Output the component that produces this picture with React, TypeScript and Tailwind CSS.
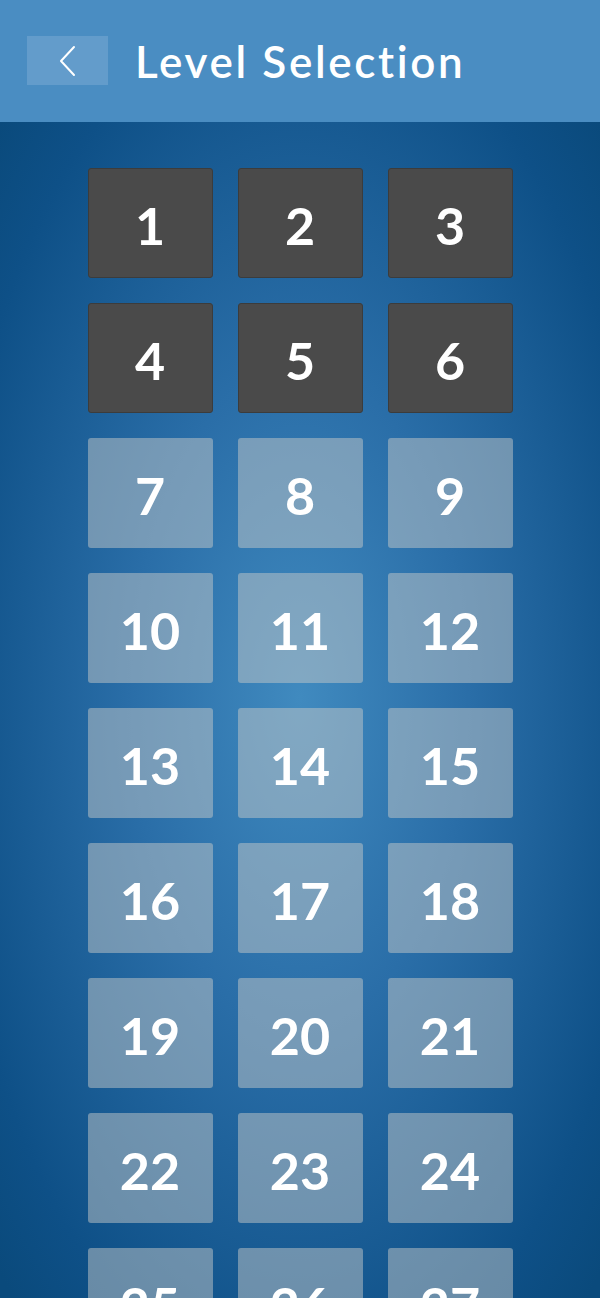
import React from 'react';

const levels = Array.from({ length: 30 }, (_, i) => i + 1);
const unlocked = 6;

const LevelTile = ({ n, done }: { n: number; done: boolean }) => {
  return (
    <button
      className={`h-[110px] w-[125px] rounded-[3px] flex items-center justify-center text-white text-[52px] font-bold leading-none ${
        done
          ? 'bg-[#4a4a4a] border border-[#3c3c3c]'
          : 'bg-[rgba(195,199,200,0.5)]'
      }`}
    >
      <span className="pt-[3px]">{n}</span>
    </button>
  );
};

const App = () => {
  return (
    <div
      className="w-[600px] h-[1298px] overflow-hidden flex flex-col"
      style={{ fontFamily: 'Lato, "Noto Sans", sans-serif' }}
    >
      <div className="h-[122px] shrink-0 bg-[#4a8dc2] flex items-center pl-[27px] pb-[1px]">
        <button className="w-[81px] h-[49px] bg-[#639ccb] flex items-center justify-center">
          <svg width="18" height="32" viewBox="0 0 18 32" fill="none">
            <path d="M15 2 L2 16 L15 30" stroke="white" strokeWidth="2" strokeLinecap="round" strokeLinejoin="round" />
          </svg>
        </button>
        <h1 className="ml-[27px] text-white text-[44px] font-semibold tracking-[0.06em] leading-none">
          Level Selection
        </h1>
      </div>

      <div className="flex-1 bg-[radial-gradient(ellipse_70%_60%_at_50%_42%,#408abf_0%,#2a6ea8_40%,#0e5087_85%,#0a4a7c_100%)] pt-[46px] flex justify-center">
        <div className="grid grid-cols-3 gap-[25px] content-start">
          {levels.map((n) => (
            <LevelTile key={n} n={n} done={n <= unlocked} />
          ))}
        </div>
      </div>
    </div>
  );
};

export default App;
